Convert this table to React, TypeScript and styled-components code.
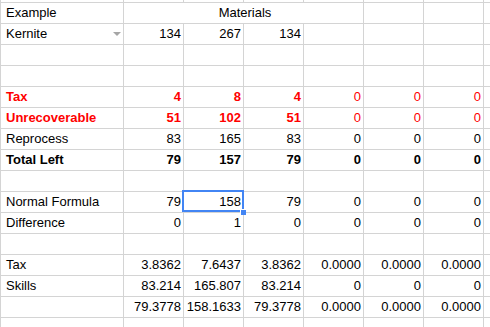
import styled, { createGlobalStyle, css } from 'styled-components';

const GlobalStyle = createGlobalStyle`
  html, body {
    margin: 0;
    padding: 0;
    background: #fff;
  }
  body {
    width: 490px;
    height: 327px;
    overflow: hidden;
    font-family: 'Liberation Sans', Arial, sans-serif;
  }
`;

const GRID = '#d4d4d4';
const RED = '#ff0000';

type Tone = 'red' | 'redBold' | 'bold' | undefined;

type Row = {
  label?: string;
  tone?: Tone;
  values: string[];
  valueTones?: Tone[];
};

const rows: Row[] = [
  { label: 'Kernite', values: ['134', '267', '134', '', '', ''] },
  { values: [] },
  { values: [] },
  {
    label: 'Tax',
    tone: 'redBold',
    values: ['4', '8', '4', '0', '0', '0'],
    valueTones: ['redBold', 'redBold', 'redBold', 'red', 'red', 'red'],
  },
  {
    label: 'Unrecoverable',
    tone: 'redBold',
    values: ['51', '102', '51', '0', '0', '0'],
    valueTones: ['redBold', 'redBold', 'redBold', 'red', 'red', 'red'],
  },
  { label: 'Reprocess', values: ['83', '165', '83', '0', '0', '0'] },
  {
    label: 'Total Left',
    tone: 'bold',
    values: ['79', '157', '79', '0', '0', '0'],
    valueTones: ['bold', 'bold', 'bold', 'bold', 'bold', 'bold'],
  },
  { values: [] },
  { label: 'Normal Formula', values: ['79', '158', '79', '0', '0', '0'] },
  { label: 'Difference', values: ['0', '1', '0', '0', '0', '0'] },
  { values: [] },
  { label: 'Tax', values: ['3.8362', '7.6437', '3.8362', '0.0000', '0.0000', '0.0000'] },
  { label: 'Skills', values: ['83.214', '165.807', '83.214', '0', '0', '0'] },
  { values: ['79.3778', '158.1633', '79.3778', '0.0000', '0.0000', '0.0000'] },
];

export default function App() {
  return (
    <>
      <GlobalStyle />
      <Sheet>
        {/* sliver of the row scrolled above the view */}
        {Array.from({ length: 8 }).map((_, i) => (
          <Strip key={`s${i}`} $last={i === 7} />
        ))}

        <Cell>Example</Cell>
        <Cell $span={4} $align="center">
          Materials
        </Cell>
        <Cell />
        <Cell />
        <Cell $last />

        {rows.map((row, r) => (
          <RowCells key={r} row={row} rowIndex={r} />
        ))}

        {Array.from({ length: 8 }).map((_, i) => (
          <Cell key={`t${i}`} $last={i === 7} />
        ))}
      </Sheet>
    </>
  );
}

function RowCells({ row, rowIndex }: { row: Row; rowIndex: number }) {
  const cells = [];
  cells.push(
    <Cell key="a" $tone={row.tone}>
      {row.label}
      {rowIndex === 0 && <DropArrow />}
    </Cell>
  );
  for (let c = 0; c < 6; c++) {
    const selected = rowIndex === 8 && c === 1;
    cells.push(
      <Cell
        key={c}
        $align="right"
        $tone={row.valueTones ? row.valueTones[c] : undefined}
        $selected={selected}
      >
        {row.values[c] ?? ''}
        {selected && <FillHandle />}
      </Cell>
    );
  }
  cells.push(<Cell key="z" $last />);
  return <>{cells}</>;
}

const Sheet = styled.div`
  display: grid;
  grid-template-columns: 123px repeat(6, 60px) 6px;
  grid-template-rows: 3px;
  grid-auto-rows: 21px;
  border-left: 1px solid ${GRID};
  width: 490px;
  box-sizing: border-box;
  overflow: hidden;
  height: 327px;
`;

const Strip = styled.div<{ $last?: boolean }>`
  height: 3px;
  border-bottom: 1px solid ${GRID};
  border-right: ${(p) => (p.$last ? 'none' : `1px solid ${GRID}`)};
  box-sizing: border-box;
`;

const toneStyles = (tone: Tone) => {
  switch (tone) {
    case 'red':
      return css`
        color: ${RED};
      `;
    case 'redBold':
      return css`
        color: ${RED};
        font-weight: bold;
      `;
    case 'bold':
      return css`
        font-weight: bold;
      `;
    default:
      return css``;
  }
};

const Cell = styled.div<{
  $align?: 'left' | 'right' | 'center';
  $span?: number;
  $tone?: Tone;
  $last?: boolean;
  $selected?: boolean;
}>`
  position: relative;
  box-sizing: border-box;
  display: flex;
  align-items: center;
  justify-content: ${(p) =>
    p.$align === 'right' ? 'flex-end' : p.$align === 'center' ? 'center' : 'flex-start'};
  grid-column: ${(p) => (p.$span ? `span ${p.$span}` : 'auto')};
  padding: 0 2px 0 5px;
  min-width: 0;
  height: 21px;
  line-height: 20px;
  font-size: 13px;
  color: #000;
  white-space: nowrap;
  border-bottom: 1px solid ${GRID};
  border-right: ${(p) => (p.$last ? 'none' : `1px solid ${GRID}`)};
  ${(p) => toneStyles(p.$tone)}
  ${(p) =>
    p.$selected &&
    css`
      &::after {
        content: '';
        position: absolute;
        left: -2px;
        top: -2px;
        right: -1px;
        bottom: 0px;
        border: 2px solid #4285f4;
        pointer-events: none;
      }
    `}
`;

const DropArrow = styled.span`
  margin-left: auto;
  margin-right: 0px;
  width: 0;
  height: 0;
  border-left: 4px solid transparent;
  border-right: 4px solid transparent;
  border-top: 4px solid #a6a6a6;
`;

const FillHandle = styled.span`
  position: absolute;
  right: -3px;
  bottom: -3px;
  width: 6px;
  height: 6px;
  background: #4285f4;
  border: 1px solid #fff;
  border-right: none;
  border-bottom: none;
  box-sizing: border-box;
  z-index: 2;
`;
